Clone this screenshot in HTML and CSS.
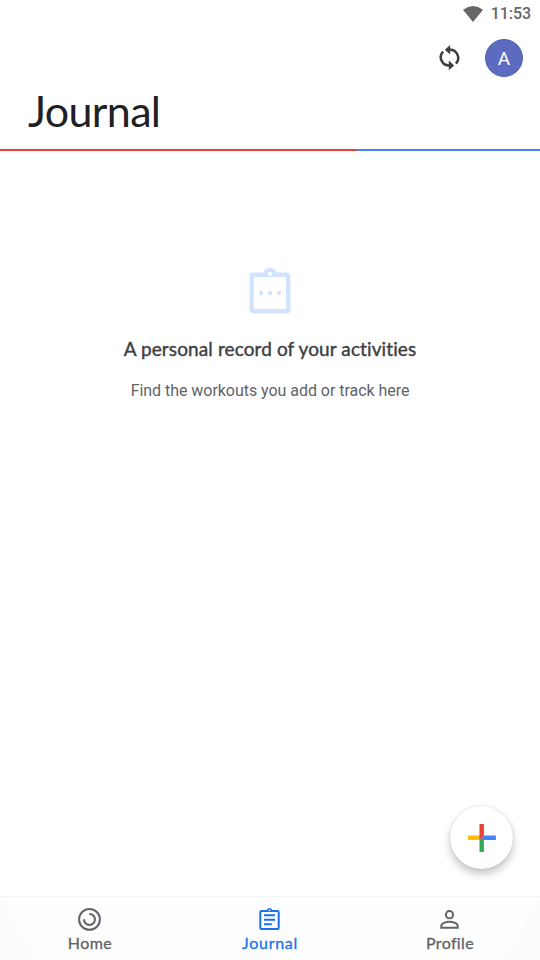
FILE: index.html
```html
<!DOCTYPE html>
<html lang="en">
<head>
<meta charset="utf-8">
<title>Journal</title>
<link rel="stylesheet" href="styles.css">
</head>
<body>
<div class="app">
  <div class="status">
    <svg class="wifi" width="20" height="16" viewBox="0 0 20 16"><path d="M0 3.7Q10-3.7 20 3.7L10 16z"/></svg>
    <span>11:53</span>
  </div>
  <header class="toolbar">
    <svg class="sync" width="26" height="26" viewBox="0 0 26 26"><g fill="none" stroke="currentColor" stroke-width="2.5"><path d="M12 4.8A8.2 8.2 0 0 1 18.9 18.6"/><path d="M13 20.4A8.2 8.2 0 0 1 6.1 6.6"/></g><path d="M13.2 0v9.6L7.8 4.8zM11.8 25.2v-9.6l5.4 4.8z" fill="currentColor"/></svg>
    <div class="avatar">A</div>
  </header>
  <h1><span class="title">Journal</span></h1>
  <div class="progress"></div>
  <main>
    <svg class="empty-icon" width="42" height="46" viewBox="0 0 42 46"><path fill="currentColor" fill-rule="evenodd" d="M4.5 4.5h9.7A7.2 7.2 0 0 1 27.8 4.5h9.7a4 4 0 0 1 4 4v33a4 4 0 0 1-4 4h-33a4 4 0 0 1-4-4v-33a4 4 0 0 1 4-4zM5 9v32h32V9zM21 3.8a2 2 0 1 0 0 4 2 2 0 0 0 0-4z"/><g fill="currentColor"><circle cx="12" cy="25" r="2.2"/><circle cx="21" cy="25" r="2.2"/><circle cx="30" cy="25" r="2.2"/></g></svg>
    <h2><span class="heading">A personal record of your activities</span></h2>
    <p><span class="hint">Find the workouts you add or track here</span></p>
  </main>
  <nav>
    <a class="tab">
      <svg width="24" height="24" viewBox="0 0 24 24" fill="none" stroke="currentColor" stroke-width="2"><circle cx="11.5" cy="12.4" r="10.4"/><path d="M11.3 6.9A5.5 5.5 0 1 1 6 12.2"/></svg>
      <span class="label home">Home</span>
    </a>
    <a class="tab active">
      <svg width="24" height="24" viewBox="0 0 24 24"><path fill="currentColor" fill-rule="evenodd" d="M3.5 3h5.2a3 3 0 0 1 5.6 0h5.2a2.2 2.2 0 0 1 2.2 2.2v15.6a2.2 2.2 0 0 1-2.2 2.2h-16a2.2 2.2 0 0 1-2.2-2.2V5.2A2.2 2.2 0 0 1 3.5 3zM3.3 5v16h16.4V5zM11.5 2.4a.9.9 0 1 0 0 1.8.9.9 0 0 0 0-1.8zM6 7.2h11v2H6zm0 4.6h11v2H6zm0 4.4h7.8v2H6z"/></svg>
      <span class="label journal">Journal</span>
    </a>
    <a class="tab">
      <svg width="24" height="24" viewBox="0 0 24 24" fill="none" stroke="currentColor" stroke-width="2"><circle cx="11.5" cy="7.7" r="3.6"/><path d="M3.3 20.7v-2c0-2.3 4.5-3.9 8.2-3.9s8.2 1.6 8.2 3.9v2z"/></svg>
      <span class="label profile">Profile</span>
    </a>
  </nav>
  <button class="fab" aria-label="Add">
    <svg width="28" height="28" viewBox="0 0 28 28"><path fill="#fbbc04" d="M0 11.5h14v4.4H0z"/><path fill="#34a853" d="M11.5 15.9h4.4v12h-4.4z"/><path fill="#4285f4" d="M15.9 11.5h12v4.4H11.5z"/><path fill="#ea4335" d="M11.5 0h4.4v11.5l-4.4 4.4z"/></svg>
  </button>
</div>
</body>
</html>
```
FILE: styles.css
```css
* { box-sizing: border-box; }
body { margin: 0; background: #fff; font-family: Roboto, sans-serif; }
.app { position: relative; width: 540px; height: 960px; display: flex; flex-direction: column; overflow: hidden; }
.status { height: 27px; padding-right: 9px; display: flex; justify-content: flex-end; align-items: center; gap: 8px; color: #666; font-size: 16px; font-weight: 500; letter-spacing: -.05px; }
.wifi { fill: #666; }
.toolbar { height: 61px; padding: 1px 17px 0 0; display: flex; justify-content: flex-end; align-items: center; gap: 22px; color: #3c4043; }
.avatar { width: 38px; height: 38px; border-radius: 50%; background: #5c6bc0; border: 1px solid #5263b2; color: #fff; font-size: 19px; line-height: 38px; text-align: center; }
h1 { margin: 0; height: 61px; padding-left: 28px; font: 400 43px/46px Lato, sans-serif; color: #202124; font-variant-ligatures: none; }
.title { letter-spacing: -.65px; }
.progress { height: 2px; background: linear-gradient(90deg, #ea4335 357px, #4285f4 357px); }
main { flex: 1; padding-top: 117px; display: flex; flex-direction: column; align-items: center; }
.empty-icon { color: #d2e3fc; }
h2 { margin: 23px 0 0; font: 400 19px/24px Lato, sans-serif; font-variant-ligatures: none; letter-spacing: .11px; color: #3c4043; -webkit-text-stroke: .4px; white-space: nowrap; }
p { margin: 18px 0 0; font-size: 16px; line-height: 24px; letter-spacing: -.04px; color: #5f6368; white-space: nowrap; }
nav { height: 64px; border-top: 1px solid #f5f5f5; background: linear-gradient(60deg, #fcfcfc 31px, transparent 32px), linear-gradient(-60deg, #fcfcfc 31px, transparent 32px), #fefefe; display: flex; }
.tab { flex: 1; padding-top: 10px; display: flex; flex-direction: column; align-items: center; color: #5f6368; }
.label { margin-top: 2px; font: 400 16px/20px Lato, sans-serif; font-variant-ligatures: none; -webkit-text-stroke: .3px; }
.home { letter-spacing: .45px; }
.journal { letter-spacing: .7px; }
.profile { letter-spacing: .35px; }
.active { color: #1a73e8; }
.fab { position: absolute; left: 450px; top: 806px; width: 63px; height: 63px; padding: 0; border: 0; border-radius: 50%; background: #fff; display: flex; align-items: center; justify-content: center; box-shadow: 0 5px 9px rgba(0,0,0,.23), 0 0 2px rgba(0,0,0,.14); }
```
